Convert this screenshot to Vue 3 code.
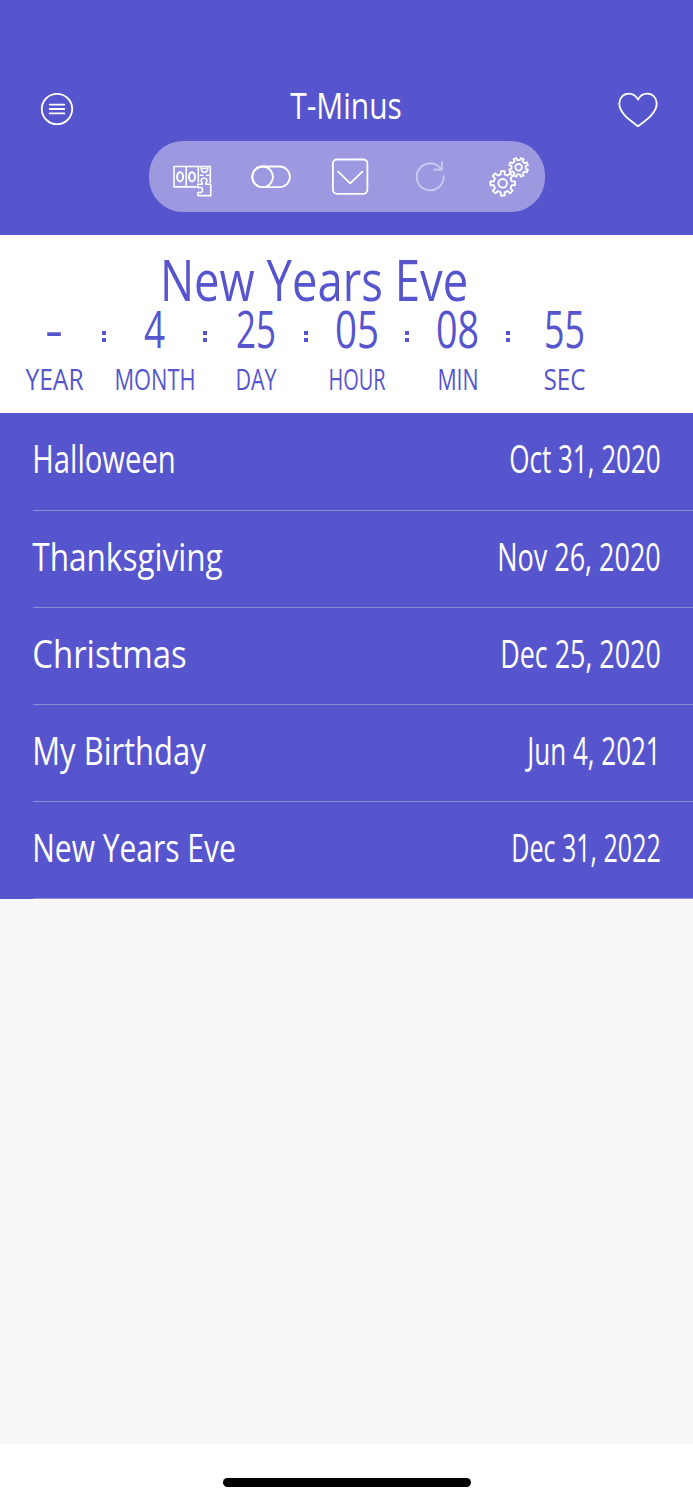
<template>
  <div class="screen">
    <header class="header">
      <div class="nav">
        <svg class="menu-icon" viewBox="0 0 34 34">
          <circle cx="17" cy="17" r="15.2" />
          <path d="M9.700 12.600H24.300M9.700 17H24.300M9.700 21.400H24.300" />
        </svg>
        <Script text="T-Minus" :width="110" :size="37" :baseline="35" />
        <svg class="heart-icon" viewBox="0 0 40 36">
          <path d="M20 34.2C11.5 28 1.3 21 1.3 11.6C1.3 6 5.3 1.6 10.6 1.6C14.8 1.6 18.2 4 20 7.6C21.8 4 25.2 1.6 29.4 1.6C34.7 1.6 38.7 6 38.7 11.6C38.7 21 28.5 28 20 34.2Z" />
        </svg>
      </div>

      <div class="toolbar">
        <!-- 计数器 -->
        <svg class="tool" viewBox="0 0 40 40">
          <path d="M24 29.9H2V9.5H38.3V25.5M14.2 9.5V29.9M26.3 9.5V25" stroke-width="1.6" />
          <ellipse cx="8.1" cy="19.8" rx="3" ry="4.6" stroke-width="2" />
          <ellipse cx="20" cy="19.8" rx="3" ry="4.6" stroke-width="2" />
          <path d="M29.3 10.5V11.5C29.300 16.500 35.700 16.500 35.700 11.500V10.500M31 11.500H34M28.500 18.200H31M34.500 18.200H36.500" stroke-width="1.500" />
          <path d="M25.800 27.200H30.300C30.900 25.800 29.200 25.300 29.200 23.400C29.200 20.600 34.900 20.600 34.900 23.400C34.900 25.300 33.300 25.800 33.900 27.200H38.700V38.600H25.800V35.600C27.300 34.700 27.700 36.300 29.500 35.300C31 34.300 31 31.500 29.500 30.600C27.800 29.700 27.300 31.300 25.800 30.300Z" stroke-width="1.600" />
        </svg>
        <!-- 开关 -->
        <svg class="tool" viewBox="0 0 40 40">
          <rect x="1.200" y="9.500" width="37.700" height="20.700" rx="10.350" />
          <circle cx="11.600" cy="19.850" r="10.350" />
        </svg>
        <!-- 勾选 -->
        <svg class="tool" viewBox="0 0 40 40">
          <rect x="2.900" y="2.500" width="34.500" height="34.300" rx="4" />
          <path d="M8.200 14.600L20.200 26.300L32.400 14.600" />
        </svg>
        <!-- 刷新 -->
        <svg class="tool disabled" viewBox="0 0 40 40">
          <path d="M33.700 19.500A13.500 13.500 0 1 1 31 11.700M31.900 5.200V12.700H24.500" />
        </svg>
        <!-- 设置 -->
        <svg class="tool" viewBox="0 0 40 40">
          <path :d="gear(13.7, 26.3, 12.4, 9.2, 0)" />
          <circle cx="13.700" cy="26.300" r="4.300" />
          <path :d="gear(29.6, 10.3, 9.6, 7.2, 22.5)" />
          <circle cx="29.600" cy="10.300" r="3.300" />
        </svg>
      </div>
    </header>

    <section class="countdown">
      <div class="event-name">
        <Script text="New Years Eve" :width="306" :size="56" :baseline="43.5" />
      </div>
      <div class="units">
        <template v-for="(u, i) in units" :key="u.label">
          <div class="unit">
            <Script :text="u.value" :width="u.valueWidth" :size="52" :baseline="42" />
            <Script :text="u.label" :width="u.labelWidth" :size="29.5" :baseline="21" />
          </div>
          <span v-if="i < units.length - 1" class="colon"></span>
        </template>
      </div>
    </section>

    <ul class="events">
      <li v-for="e in events" :key="e.name" class="event">
        <Script :text="e.name" :width="e.nameWidth" :size="37.5" :baseline="60" />
        <Script :text="e.date" :width="e.dateWidth" :size="37.5" :baseline="60" />
      </li>
    </ul>

    <footer class="footer">
      <div class="home-bar"></div>
    </footer>
  </div>
</template>

<script setup>
import { h } from 'vue'

// 窄体文字，按给定宽度压缩字形
const Script = (props) => {
  const pad = props.size * 0.02
  return h('svg', { width: props.width, height: props.baseline + 4 }, [
    h('text', {
      x: -pad,
      y: props.baseline,
      'font-size': props.size,
      textLength: props.width + pad * 2,
      lengthAdjust: 'spacingAndGlyphs'
    }, props.text)
  ])
}
Script.props = ['text', 'width', 'size', 'baseline']

const units = [
  { value: '-', valueWidth: 16, label: 'YEAR', labelWidth: 57 },
  { value: '4', valueWidth: 19, label: 'MONTH', labelWidth: 80 },
  { value: '25', valueWidth: 38, label: 'DAY', labelWidth: 40 },
  { value: '05', valueWidth: 42, label: 'HOUR', labelWidth: 56 },
  { value: '08', valueWidth: 41, label: 'MIN', labelWidth: 40 },
  { value: '55', valueWidth: 39, label: 'SEC', labelWidth: 41 }
]

const events = [
  { name: 'Halloween', nameWidth: 142, date: 'Oct 31, 2020', dateWidth: 150 },
  { name: 'Thanksgiving', nameWidth: 189, date: 'Nov 26, 2020', dateWidth: 162 },
  { name: 'Christmas', nameWidth: 153, date: 'Dec 25, 2020', dateWidth: 159 },
  { name: 'My Birthday', nameWidth: 172, date: 'Jun 4, 2021', dateWidth: 132 },
  { name: 'New Years Eve', nameWidth: 202, date: 'Dec 31, 2022', dateWidth: 148 }
]

// 齿轮轮廓，8 个齿
const gear = (cx, cy, outer, inner, turn) => {
  const points = []
  for (let i = 0; i < 8; i++) {
    const steps = [[-12, inner], [-9, outer], [9, outer], [12, inner]]
    steps.forEach(([offset, r]) => {
      const a = ((i * 45 + offset + turn - 90) * Math.PI) / 180
      points.push(`${(cx + r * Math.cos(a)).toFixed(2)} ${(cy + r * Math.sin(a)).toFixed(2)}`)
    })
  }
  return `M${points.join('L')}Z`
}
</script>

<style>
body {
  margin: 0;
}

svg {
  display: block;
  flex: none;
}
</style>

<style scoped>
.screen {
  display: flex;
  flex-direction: column;
  width: 693px;
  height: 1500px;
  overflow: hidden;
  background: #f8f8f8;
  font-family: 'Open Sans', 'Noto Sans', sans-serif;
}

.screen svg {
  overflow: visible;
  fill: currentColor;
}

.header {
  box-sizing: border-box;
  height: 235px;
  padding-top: 84px;
  background: #5755cd;
  color: #fff;
}

.nav {
  display: flex;
  justify-content: space-between;
  height: 57px;
  padding: 0 35.5px 0 39.7px;
}

.screen .menu-icon,
.screen .heart-icon,
.screen .tool {
  fill: none;
  stroke: #fff;
  stroke-width: 1.8;
  stroke-linejoin: round;
  stroke-linecap: round;
}

.menu-icon {
  width: 34px;
  height: 34px;
  margin-top: 7.5px;
}

.heart-icon {
  width: 40px;
  height: 36px;
  margin-top: 8px;
}

.toolbar {
  box-sizing: border-box;
  display: flex;
  gap: 39.2px;
  width: 396px;
  height: 71px;
  margin: 0 auto;
  padding: 16px 0 0 23.5px;
  border-radius: 34px;
  background: #9c99e1;
}

.tool {
  width: 40px;
  height: 40px;
}

.disabled {
  opacity: 0.5;
}

.countdown {
  box-sizing: border-box;
  height: 178px;
  padding-top: 22px;
  background: #fff;
  color: #5755cd;
}

.event-name {
  display: flex;
  height: 49px;
  padding-left: 161px;
}

.units {
  display: flex;
  padding-left: 14px;
}

.unit {
  display: flex;
  flex-direction: column;
  align-items: center;
  width: 80px;
  gap: 17px;
}

.unit:last-child {
  margin-left: 6px;
}

.colon {
  display: flex;
  flex-direction: column;
  justify-content: space-between;
  box-sizing: border-box;
  width: 4px;
  height: 11px;
  margin: 25px 9.3px 0 7.7px;
  border: solid #5755cd;
  border-width: 4px 0;
}

.events {
  margin: 0;
  padding: 0;
  list-style: none;
  background: #5755cd;
  color: #fff;
}

.event {
  box-sizing: border-box;
  display: flex;
  justify-content: space-between;
  height: 97px;
  margin-left: 33px;
  padding-right: 33px;
  border-bottom: 1px solid #8d8bd2;
}

.event:first-child {
  height: 98px;
}

.footer {
  box-sizing: border-box;
  display: flex;
  justify-content: center;
  height: 56px;
  margin-top: auto;
  padding-top: 34px;
  background: #fff;
}

.home-bar {
  width: 248px;
  height: 9px;
  border-radius: 5px;
  background: #000;
}
</style>
